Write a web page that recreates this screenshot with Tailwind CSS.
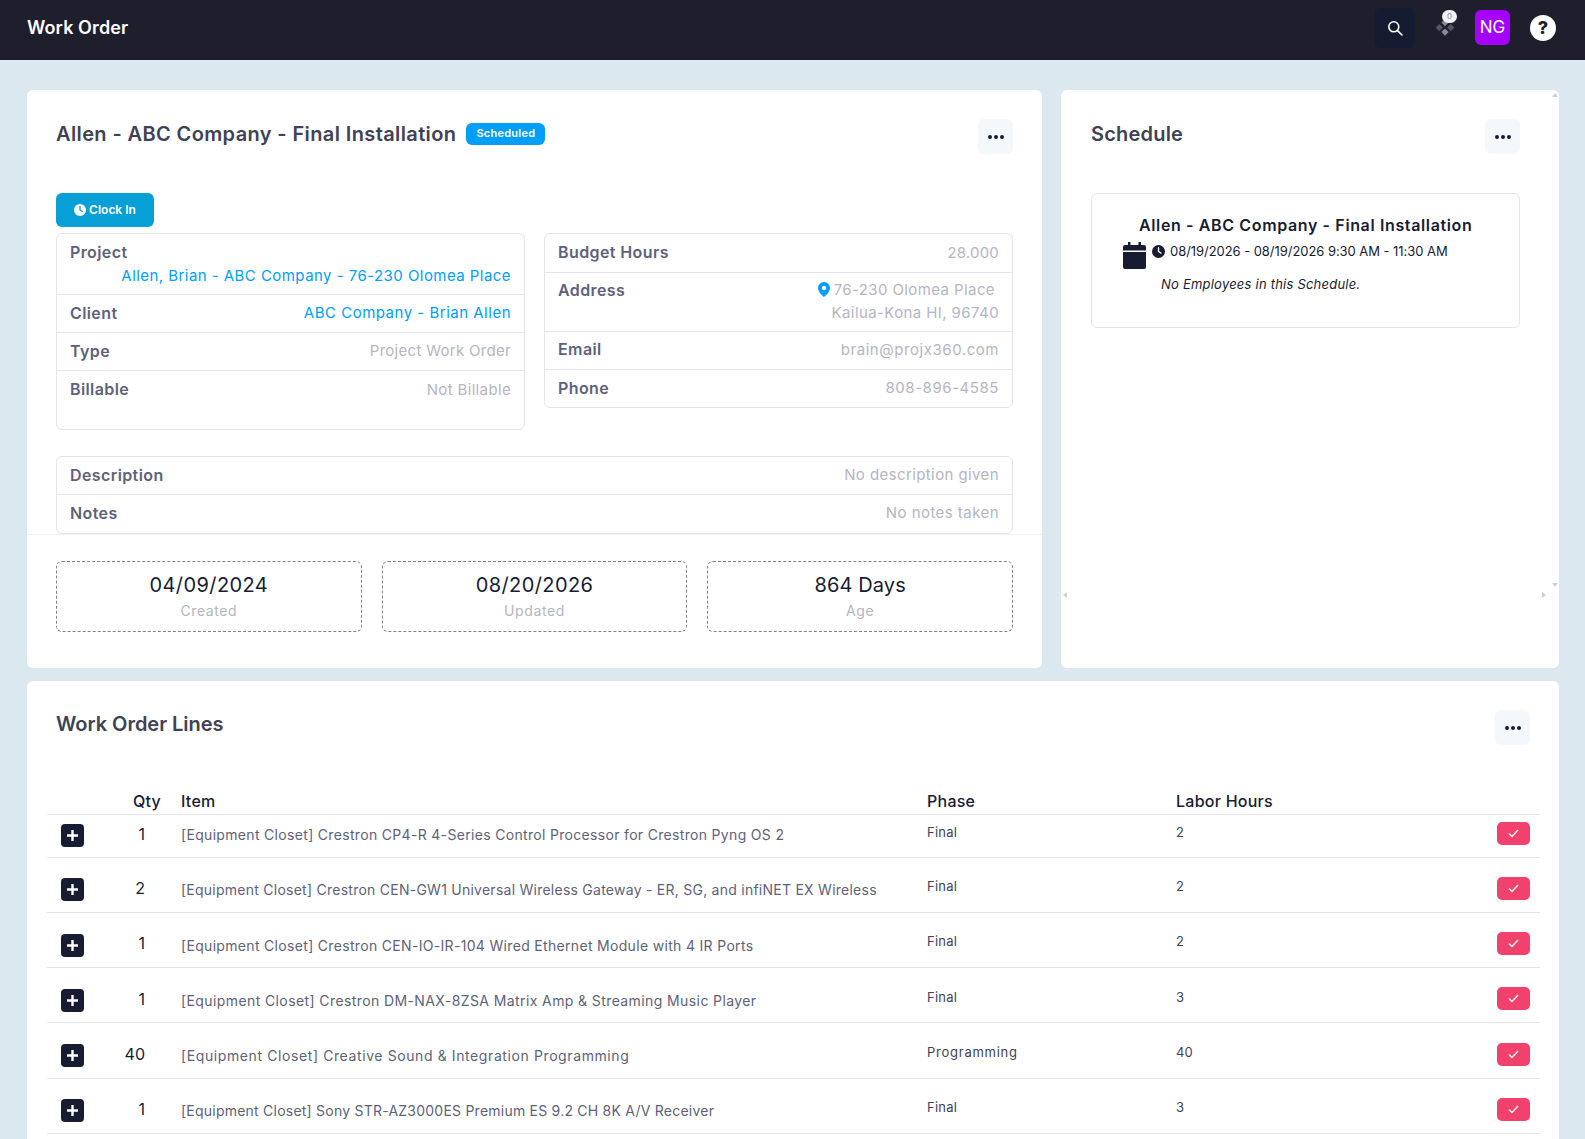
<!DOCTYPE html>
<html lang="en">
<head>
  <meta charset="UTF-8" />
  <title>Work Order</title>
  <script src="https://cdn.jsdelivr.net/npm/@tailwindcss/browser@4"></script>
</head>
<body class="h-[1139px] overflow-hidden bg-[#dce8f0] font-['Inter',sans-serif] text-[#181c32]">

  <!-- Top bar -->
  <header class="h-[60px] bg-[#1e1e2d] flex items-center pl-[27px]">
    <h1 class="text-[18px] font-semibold text-white -mt-[6px] tracking-[0.1px]">Work Order</h1>
    <div class="ml-auto flex items-center h-full">
      <button class="w-10 h-10 mb-[5px] rounded-md bg-[#151b30] flex items-center justify-center">
        <svg class="w-4 h-4" viewBox="0 0 16 16" fill="none" stroke="white" stroke-width="1.6" stroke-linecap="round"><circle cx="6.8" cy="6.8" r="5"/><path d="M10.6 10.6 15 15"/></svg>
      </button>
      <div class="relative w-[20px] h-[18px] ml-[20px] mb-[6px]">
        <svg class="w-[20px] h-[18px]" viewBox="0 0 20 18"><path d="M10 1l3.600 3.600L10 8.200 6.400 4.600z" fill="#8a8a99"/><path d="M4.300 6l3.600 3.600-3.600 3.600L.7 9.600zM15.700 6l3.600 3.600-3.600 3.600-3.600-3.600z" fill="#55556a"/><path d="M10 10.500l3.600 3.600-3.600 3.600-3.600-3.600z" fill="#8a8a99"/></svg>
        <span class="absolute -top-[8px] left-[7px] w-[15px] h-[13px] rounded-full bg-[#f1f1f4] text-[8px] leading-[13px] text-center text-[#8a8a99]">0</span>
      </div>
      <div class="w-[35px] h-[35px] ml-[20px] mb-[5px] rounded-md bg-[#a600ff] text-white text-[17px] leading-[35px] text-center">NG</div>
      <div class="w-[26px] h-[26px] ml-[20px] mr-[29px] mb-[5px] rounded-full bg-white text-[#1e1e2d] text-[18px] leading-[26px] font-extrabold text-center">?</div>
    </div>
  </header>

  <main class="pt-[30px] pl-[27px] pr-[26px]">
    <div class="flex gap-[19px] h-[578px]">

      <!-- Work order details -->
      <section class="w-[1015px] bg-white rounded-md px-[29px] pt-[29px]">
        <div class="flex items-start justify-between">
          <div class="flex items-center gap-[10px] mt-[1px]">
            <h2 class="text-[20px] font-semibold text-[#3f4254] tracking-[0.38px] leading-[28px]">Allen - ABC Company - Final Installation</h2>
            <span class="bg-[#009ef7] text-white text-[11px] font-semibold rounded-md px-[10px] h-[22px] leading-[21px] tracking-[0.25px]">Scheduled</span>
          </div>
          <button class="w-[35px] h-[35px] rounded-md bg-[#f5f8fa] flex items-center justify-center gap-[2px]">
            <i class="w-1 h-1 rounded-full bg-[#181c32]"></i><i class="w-1 h-1 rounded-full bg-[#181c32]"></i><i class="w-1 h-1 rounded-full bg-[#181c32]"></i>
          </button>
        </div>

        <button class="mt-[39px] w-[98px] h-[34px] rounded-md bg-[#069fd6] text-white text-[12px] font-semibold flex items-center justify-center gap-[3px]">
          <svg class="w-3 h-3" viewBox="0 0 12 12"><circle cx="6" cy="6" r="6" fill="white"/><path d="M6 2.500V6l2.300 1.500" fill="none" stroke="#069fd6" stroke-width="1.300" stroke-linecap="round"/></svg>
          Clock In
        </button>

        <div class="mt-[6px] grid grid-cols-2 gap-[19px] items-start">
          <div class="h-[197px] border border-[#e4e6ef] rounded-md">
            <div class="h-[61px] border-b border-[#e4e6ef] px-[13px] pt-[6px]">
              <div class="text-[16px] leading-[24px] font-semibold text-[#5e6278] tracking-[0.4px]">Project</div>
              <div class="text-[15px] leading-[23px] text-right text-[#009ef7] tracking-[0.45px]">Allen, Brian - ABC Company - 76-230 Olomea Place</div>
            </div>
            <div class="h-[38px] border-b border-[#e4e6ef] px-[13px] flex items-center justify-between">
              <span class="pb-[2px] text-[16px] font-semibold text-[#5e6278] tracking-[0.4px]">Client</span>
              <span class="text-[15px] text-[#009ef7] tracking-[0.5px]">ABC Company - Brian Allen</span>
            </div>
            <div class="h-[38px] border-b border-[#e4e6ef] px-[13px] flex items-center justify-between">
              <span class="pb-[2px] text-[16px] font-semibold text-[#5e6278] tracking-[0.4px]">Type</span>
              <span class="text-[15px] text-[#b5b5c3] tracking-[0.3px]">Project Work Order</span>
            </div>
            <div class="h-[38px] px-[13px] flex items-center justify-between">
              <span class="pb-[2px] text-[16px] font-semibold text-[#5e6278] tracking-[0.4px]">Billable</span>
              <span class="text-[15px] text-[#b5b5c3] tracking-[0.35px]">Not Billable</span>
            </div>
          </div>

          <div class="border border-[#e4e6ef] rounded-md">
            <div class="h-[39px] border-b border-[#e4e6ef] px-[13px] flex items-center justify-between">
              <span class="pb-[2px] text-[16px] font-semibold text-[#5e6278] tracking-[0.4px]">Budget Hours</span>
              <span class="text-[15px] text-[#b5b5c3] tracking-[0.2px]">28.000</span>
            </div>
            <div class="h-[59px] border-b border-[#e4e6ef] px-[13px] pt-[5px] flex justify-between">
              <span class="text-[16px] leading-[24px] font-semibold text-[#5e6278] tracking-[0.4px]">Address</span>
              <div class="text-[15px] leading-[23px] text-[#b5b5c3] text-right tracking-[0.4px]">
                <div class="flex items-center pr-[4px]">
                  <svg class="w-[12px] h-[15px] mr-[4px] -ml-[2px]" viewBox="0 0 12 15"><path fill-rule="evenodd" fill="#009ef7" d="M6 0a6 6 0 0 1 6 6c0 3.500-4 7.500-6 9-2-1.500-6-5.500-6-9a6 6 0 0 1 6-6zm0 3.800a2.200 2.200 0 1 0 0 4.400 2.200 2.200 0 0 0 0-4.400z"/></svg>
                  76-230 Olomea Place
                </div>
                <div>Kailua-Kona HI, 96740</div>
              </div>
            </div>
            <div class="h-[38px] border-b border-[#e4e6ef] px-[13px] flex items-center justify-between">
              <span class="pb-[3px] text-[16px] font-semibold text-[#5e6278] tracking-[0.4px]">Email</span>
              <span class="pb-[1px] text-[15px] text-[#b5b5c3] tracking-[0.55px]">brain@projx360.com</span>
            </div>
            <div class="h-[37px] px-[13px] flex items-center justify-between">
              <span class="pb-[2px] text-[16px] font-semibold text-[#5e6278] tracking-[0.4px]">Phone</span>
              <span class="text-[15px] text-[#b5b5c3] tracking-[0.55px]">808-896-4585</span>
            </div>
          </div>
        </div>

        <div class="mt-[26px] border border-[#e4e6ef] rounded-md">
          <div class="h-[38px] border-b border-[#e4e6ef] px-[13px] flex items-center justify-between">
            <span class="pb-[2px] text-[16px] font-semibold text-[#5e6278] tracking-[0.4px]">Description</span>
            <span class="pb-[1px] text-[15px] text-[#b5b5c3] tracking-[0.4px]">No description given</span>
          </div>
          <div class="h-[38px] px-[13px] flex items-center justify-between">
            <span class="pb-[2px] text-[16px] font-semibold text-[#5e6278] tracking-[0.4px]">Notes</span>
            <span class="pb-[1px] text-[15px] text-[#b5b5c3] tracking-[0.45px]">No notes taken</span>
          </div>
        </div>

        <div class="-mx-[29px] border-t border-[#eff2f5] px-[29px] pt-[26px]">
          <div class="grid grid-cols-3 gap-5">
            <div class="h-[71px] border border-dashed border-[#7e8299] rounded-md text-center pt-[9px]">
              <div class="text-[20px] leading-[28px] tracking-[0.4px] text-[#181c32]">04/09/2024</div>
              <div class="text-[14px] leading-[24px] text-[#b5b5c3] tracking-[0.6px]">Created</div>
            </div>
            <div class="h-[71px] border border-dashed border-[#7e8299] rounded-md text-center pt-[9px]">
              <div class="text-[20px] leading-[28px] tracking-[0.4px] text-[#181c32]">08/20/2026</div>
              <div class="text-[14px] leading-[24px] text-[#b5b5c3] tracking-[0.6px]">Updated</div>
            </div>
            <div class="h-[71px] border border-dashed border-[#7e8299] rounded-md text-center pt-[9px]">
              <div class="text-[20px] leading-[28px] tracking-[0.1px] text-[#181c32]">864 Days</div>
              <div class="text-[14px] leading-[24px] text-[#b5b5c3] tracking-[0.6px]">Age</div>
            </div>
          </div>
        </div>
      </section>

      <!-- Schedule -->
      <section class="relative flex-1 bg-white rounded-md pl-[30px] pr-[39px] pt-[29px]">
        <div class="flex items-start justify-between">
          <h2 class="text-[20px] font-semibold text-[#3f4254] tracking-[0.2px] leading-[28px] mt-[1px]">Schedule</h2>
          <button class="w-[35px] h-[35px] rounded-md bg-[#f5f8fa] flex items-center justify-center gap-[2px]">
            <i class="w-1 h-1 rounded-full bg-[#181c32]"></i><i class="w-1 h-1 rounded-full bg-[#181c32]"></i><i class="w-1 h-1 rounded-full bg-[#181c32]"></i>
          </button>
        </div>
        <div class="mt-[39px] h-[135px] border border-[#e4e6ef] rounded-md pl-[31px] pt-[20px]">
          <div class="pl-[16px] text-[16px] leading-[22px] font-semibold tracking-[0.63px] whitespace-nowrap">Allen - ABC Company - Final Installation</div>
          <div class="flex items-start mt-[4px]">
            <svg class="w-[23px] h-[27px] shrink-0 mt-[2px]" viewBox="0 0 23 27" fill="#181c32"><path d="M5 0h2.500v4H5zM15.500 0H18v4h-2.500z"/><path d="M2 3h19a2 2 0 0 1 2 2v3.500H0V5a2 2 0 0 1 2-2zM0 10h23v15a2 2 0 0 1-2 2H2a2 2 0 0 1-2-2z"/></svg>
            <svg class="w-[13px] h-[13px] ml-[6px] mt-[5px] shrink-0" viewBox="0 0 12 12"><circle cx="6" cy="6" r="6" fill="#181c32"/><path d="M6 2.500V6l2.300 1.500" fill="none" stroke="white" stroke-width="1.200" stroke-linecap="round"/></svg>
            <span class="ml-[5px] mt-[2px] text-[13px] leading-[19px] tracking-[-0.05px] whitespace-nowrap">08/19/2026 - 08/19/2026 9:30 AM - 11:30 AM</span>
          </div>
          <div class="pl-[38px] mt-[5px] text-[13px] leading-[20px] italic tracking-[0.22px]">No Employees in this Schedule.</div>
        </div>
        <!-- scrollbar arrows -->
        <i class="absolute top-[3px] right-[1px] w-0 h-0 border-x-[3px] border-x-transparent border-b-[4px] border-b-[#cfcfcf]"></i>
        <i class="absolute top-[493px] right-[1px] w-0 h-0 border-x-[3px] border-x-transparent border-t-[4px] border-t-[#cfcfcf]"></i>
        <i class="absolute top-[502px] left-[2px] w-0 h-0 border-y-[3px] border-y-transparent border-r-[4px] border-r-[#cfcfcf]"></i>
        <i class="absolute top-[502px] right-[13px] w-0 h-0 border-y-[3px] border-y-transparent border-l-[4px] border-l-[#cfcfcf]"></i>
      </section>
    </div>

    <!-- Work order lines -->
    <section class="mt-[13px] h-[600px] bg-white rounded-md pl-[20px] pr-[19px] pt-[29px]">
      <div class="flex items-start justify-between pl-[9px] pr-[10px]">
        <h2 class="text-[20px] font-semibold text-[#3f4254] tracking-[-0.03px] leading-[28px]">Work Order Lines</h2>
        <button class="w-[35px] h-[35px] rounded-md bg-[#f5f8fa] flex items-center justify-center gap-[2px]">
          <i class="w-1 h-1 rounded-full bg-[#181c32]"></i><i class="w-1 h-1 rounded-full bg-[#181c32]"></i><i class="w-1 h-1 rounded-full bg-[#181c32]"></i>
        </button>
      </div>

      <div class="mt-[43px] grid grid-cols-[73px_45px_762px_249px_321px_33px_10px] border-b border-[#e4e6ef] h-[27px] pt-[1px] text-[16px] leading-[24px] font-medium tracking-[0.25px]">
        <span></span><span class="pl-[13px] whitespace-nowrap">Qty</span><span class="pl-[16px]">Item</span><span>Phase</span><span>Labor Hours</span><span></span><span></span>
      </div>

      <div class="grid grid-cols-[73px_45px_762px_249px_321px_33px_10px] items-start h-[43px] pt-[9px] border-b border-[#e4e6ef]">
        <button class="ml-[14px] w-[23px] h-[23px] rounded-[4px] bg-[#181c32] flex items-center justify-center"><svg class="w-[11px] h-[11px]" viewBox="0 0 11 11" stroke="white" stroke-width="2.4"><path d="M5.500 0v11M0 5.500h11"/></svg></button>
        <span class="pr-[20px] -mt-[1px] text-right text-[16px] leading-[22px]">1</span>
        <span class="pl-[16px] -mt-[1px] text-[14px] leading-[24px] text-[#5e6278] tracking-[0.32px]">[Equipment Closet] Crestron CP4-R 4-Series Control Processor for Crestron Pyng OS 2</span>
        <span class="-mt-[1px] text-[13px] leading-[18px] tracking-[0.25px] text-[#3f4254]">Final</span>
        <span class="-mt-[1px] text-[13px] leading-[18px] text-[#3f4254]">2</span>
        <button class="w-[33px] h-[23px] -mt-[2px] rounded-[5px] bg-[#f1416c] flex items-center justify-center"><svg class="w-[11px] h-[9px]" viewBox="0 0 11 9" fill="none" stroke="white" stroke-width="1.300"><path d="M1 4.500 4 7.500 10 1"/></svg></button>
      </div>
      <div class="grid grid-cols-[73px_45px_762px_249px_321px_33px_10px] items-start h-[55px] pt-[20px] border-b border-[#e4e6ef]">
        <button class="ml-[14px] w-[23px] h-[23px] rounded-[4px] bg-[#181c32] flex items-center justify-center"><svg class="w-[11px] h-[11px]" viewBox="0 0 11 11" stroke="white" stroke-width="2.4"><path d="M5.500 0v11M0 5.500h11"/></svg></button>
        <span class="pr-[20px] -mt-[1px] text-right text-[16px] leading-[22px]">2</span>
        <span class="pl-[16px] text-[14px] leading-[24px] text-[#5e6278] tracking-[0.25px]">[Equipment Closet] Crestron CEN-GW1 Universal Wireless Gateway - ER, SG, and infiNET EX Wireless</span>
        <span class="-mt-[1px] text-[13px] leading-[18px] tracking-[0.25px] text-[#3f4254]">Final</span>
        <span class="-mt-[1px] text-[13px] leading-[18px] text-[#3f4254]">2</span>
        <button class="w-[33px] h-[23px] -mt-[1px] rounded-[5px] bg-[#f1416c] flex items-center justify-center"><svg class="w-[11px] h-[9px]" viewBox="0 0 11 9" fill="none" stroke="white" stroke-width="1.300"><path d="M1 4.500 4 7.500 10 1"/></svg></button>
      </div>
      <div class="grid grid-cols-[73px_45px_762px_249px_321px_33px_10px] items-start h-[55px] pt-[21px] border-b border-[#e4e6ef]">
        <button class="ml-[14px] w-[23px] h-[23px] rounded-[4px] bg-[#181c32] flex items-center justify-center"><svg class="w-[11px] h-[11px]" viewBox="0 0 11 11" stroke="white" stroke-width="2.4"><path d="M5.500 0v11M0 5.500h11"/></svg></button>
        <span class="pr-[20px] -mt-[2px] text-right text-[16px] leading-[22px]">1</span>
        <span class="pl-[16px] text-[14px] leading-[24px] text-[#5e6278] tracking-[0.32px]">[Equipment Closet] Crestron CEN-IO-IR-104 Wired Ethernet Module with 4 IR Ports</span>
        <span class="-mt-[2px] text-[13px] leading-[18px] tracking-[0.25px] text-[#3f4254]">Final</span>
        <span class="-mt-[2px] text-[13px] leading-[18px] text-[#3f4254]">2</span>
        <button class="w-[33px] h-[23px] -mt-[2px] rounded-[5px] bg-[#f1416c] flex items-center justify-center"><svg class="w-[11px] h-[9px]" viewBox="0 0 11 9" fill="none" stroke="white" stroke-width="1.300"><path d="M1 4.500 4 7.500 10 1"/></svg></button>
      </div>
      <div class="grid grid-cols-[73px_45px_762px_249px_321px_33px_10px] items-start h-[55px] pt-[21px] border-b border-[#e4e6ef]">
        <button class="ml-[14px] w-[23px] h-[23px] rounded-[4px] bg-[#181c32] flex items-center justify-center"><svg class="w-[11px] h-[11px]" viewBox="0 0 11 11" stroke="white" stroke-width="2.4"><path d="M5.500 0v11M0 5.500h11"/></svg></button>
        <span class="pr-[20px] -mt-[1px] text-right text-[16px] leading-[22px]">1</span>
        <span class="pl-[16px] text-[14px] leading-[24px] text-[#5e6278] tracking-[0.4px]">[Equipment Closet] Crestron DM-NAX-8ZSA Matrix Amp &amp; Streaming Music Player</span>
        <span class="-mt-[1px] text-[13px] leading-[18px] tracking-[0.25px] text-[#3f4254]">Final</span>
        <span class="-mt-[1px] text-[13px] leading-[18px] text-[#3f4254]">3</span>
        <button class="w-[33px] h-[23px] -mt-[2px] rounded-[5px] bg-[#f1416c] flex items-center justify-center"><svg class="w-[11px] h-[9px]" viewBox="0 0 11 9" fill="none" stroke="white" stroke-width="1.300"><path d="M1 4.500 4 7.500 10 1"/></svg></button>
      </div>
      <div class="grid grid-cols-[73px_45px_762px_249px_321px_33px_10px] items-start h-[56px] pt-[21px] border-b border-[#e4e6ef]">
        <button class="ml-[14px] w-[23px] h-[23px] rounded-[4px] bg-[#181c32] flex items-center justify-center"><svg class="w-[11px] h-[11px]" viewBox="0 0 11 11" stroke="white" stroke-width="2.4"><path d="M5.500 0v11M0 5.500h11"/></svg></button>
        <span class="pr-[20px] -mt-[1px] text-right text-[16px] leading-[22px]">40</span>
        <span class="pl-[16px] text-[14px] leading-[24px] text-[#5e6278] tracking-[0.6px]">[Equipment Closet] Creative Sound &amp; Integration Programming</span>
        <span class="-mt-[1px] text-[13px] leading-[18px] tracking-[0.75px] text-[#3f4254]">Programming</span>
        <span class="-mt-[1px] text-[13px] leading-[18px] text-[#3f4254]">40</span>
        <button class="w-[33px] h-[23px] -mt-[1px] rounded-[5px] bg-[#f1416c] flex items-center justify-center"><svg class="w-[11px] h-[9px]" viewBox="0 0 11 9" fill="none" stroke="white" stroke-width="1.300"><path d="M1 4.500 4 7.500 10 1"/></svg></button>
      </div>
      <div class="grid grid-cols-[73px_45px_762px_249px_321px_33px_10px] items-start h-[55px] pt-[20px] border-b border-[#e4e6ef]">
        <button class="ml-[14px] w-[23px] h-[23px] rounded-[4px] bg-[#181c32] flex items-center justify-center"><svg class="w-[11px] h-[11px]" viewBox="0 0 11 11" stroke="white" stroke-width="2.4"><path d="M5.500 0v11M0 5.500h11"/></svg></button>
        <span class="pr-[20px] -mt-[1px] text-right text-[16px] leading-[22px]">1</span>
        <span class="pl-[16px] text-[14px] leading-[24px] text-[#5e6278] tracking-[0.23px]">[Equipment Closet] Sony STR-AZ3000ES Premium ES 9.2 CH 8K A/V Receiver</span>
        <span class="-mt-[1px] text-[13px] leading-[18px] tracking-[0.25px] text-[#3f4254]">Final</span>
        <span class="-mt-[1px] text-[13px] leading-[18px] text-[#3f4254]">3</span>
        <button class="w-[33px] h-[23px] -mt-[1px] rounded-[5px] bg-[#f1416c] flex items-center justify-center"><svg class="w-[11px] h-[9px]" viewBox="0 0 11 9" fill="none" stroke="white" stroke-width="1.300"><path d="M1 4.500 4 7.500 10 1"/></svg></button>
      </div>
    </section>
  </main>
</body>
</html>
